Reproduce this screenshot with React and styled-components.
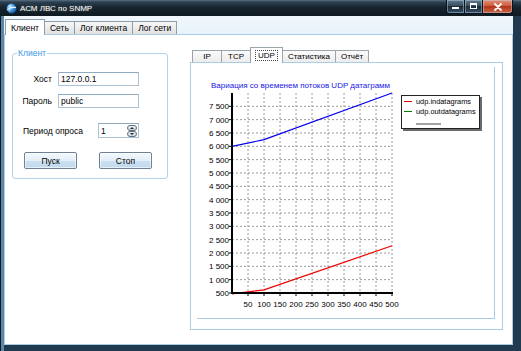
import React from 'react';
import styled, { createGlobalStyle } from 'styled-components';

const GlobalStyle = createGlobalStyle`
  html, body {
    margin: 0;
    padding: 0;
    background: #ffffff;
  }
  body {
    font-family: "Liberation Sans", Arial, sans-serif;
  }
`;

const Window = styled.div`
  width: 521px;
  height: 351px;
  display: flex;
  flex-direction: column;
  background: #1d3346;
  overflow: hidden;
  font-family: "Liberation Sans", Arial, sans-serif;
  color: #000;
`;

const TitleBar = styled.div`
  height: 16px;
  flex: none;
  display: flex;
  align-items: flex-start;
  background: linear-gradient(to bottom, #5a7082 0, #2c4253 2px, #17252f 7px, #0f1a22 100%);
`;

const TitleIcon = styled.svg`
  margin: 3px 0 0 6px;
  flex: none;
`;

const TitleText = styled.div`
  margin-left: 3px;
  line-height: 18px;
  font-size: 8px;
  color: #ffffff;
  text-shadow: 0 0 3px rgba(255, 255, 255, 0.35);
`;

const WindowButtons = styled.div`
  margin-left: auto;
  margin-right: 8px;
  display: flex;
`;

const WinButton = styled.div`
  width: ${p => p.$w}px;
  height: 14px;
  box-sizing: border-box;
  display: flex;
  align-items: center;
  justify-content: center;
  border: 1px solid #0a1319;
  border-top: none;
  box-shadow: inset 0 0 0 1px rgba(190, 215, 235, 0.45);
  background: ${p => p.$close
    ? 'linear-gradient(to bottom, #e28e76 0, #cc5637 50%, #b0361a 50%, #cf6444 100%)'
    : 'linear-gradient(to bottom, #627b8e 0, #324859 50%, #1d2d3a 50%, #34506a 100%)'};
  border-radius: ${p => p.$close ? '0 0 3px 0' : p.$first ? '0 0 0 3px' : '0'};
  margin-left: -1px;
`;

const Frame = styled.div`
  flex: 1;
  display: flex;
  padding: 0 8px 6px 4px;
  background: linear-gradient(to right, #0e1820 0, #0e1820 1px, #5d87a5 1px, #5d87a5 4px, #213a4f 4px);
`;

const Client = styled.div`
  flex: 1;
  display: flex;
  flex-direction: column;
  background: #ffffff;
`;

const TabStrip = styled.div`
  height: 18px;
  flex: none;
  display: flex;
  align-items: flex-end;
  padding-left: 1px;
  background: linear-gradient(to bottom, #f1f8fd, #e7f2fa);
  position: relative;
  z-index: 1;
`;

const MainTab = styled.div`
  height: ${p => p.$active ? 16 : 13}px;
  box-sizing: border-box;
  padding: 0 5px;
  margin-left: ${p => p.$first ? 0 : -1}px;
  margin-bottom: ${p => p.$active ? -1 : 0}px;
  display: flex;
  align-items: center;
  font-size: 8.5px;
  border: 1px solid #8c9dab;
  border-bottom: none;
  background: ${p => p.$active ? '#ffffff' : 'linear-gradient(to bottom, #f7f7f7, #e1e1e1)'};
  position: relative;
  z-index: ${p => p.$active ? 2 : 1};
`;

const TabPage = styled.div`
  flex: 1;
  display: flex;
  align-items: flex-start;
  border: 1px solid #a9cbe3;
`;

const GroupBox = styled.fieldset`
  margin: 13px 0 0 7px;
  width: 156px;
  box-sizing: border-box;
  min-inline-size: 0;
  padding: 14px 0 9px 0;
  border: 1px solid #b3d3ea;
  border-radius: 3px;
`;

const GroupLegend = styled.legend`
  margin-left: 4px;
  padding: 0 1px;
  font-size: 8.5px;
  line-height: 10px;
  color: #3a9ae6;
`;

const Row = styled.div`
  display: flex;
  align-items: center;
  margin-top: ${p => p.$top || 0}px;
  padding-left: ${p => p.$indent || 0}px;
  gap: ${p => p.$gap || 0}px;
`;

const Label = styled.span`
  width: ${p => p.$w}px;
  text-align: ${p => p.$align || 'left'};
  font-size: 8.5px;
  white-space: nowrap;
`;

const TextBox = styled.input`
  width: 81px;
  height: 14px;
  box-sizing: border-box;
  margin: 0 0 0 6px;
  padding: 0 2px;
  border: 1px solid #a9c2d6;
  border-top-color: #8fa9be;
  font-family: "Liberation Sans", Arial, sans-serif;
  font-size: 8.5px;
  color: #000;
  background: #fff;
  outline: none;
`;

const Spinner = styled.div`
  width: 41px;
  height: 15px;
  box-sizing: border-box;
  display: flex;
  align-items: center;
  border: 1px solid #a9c2d6;
  border-top-color: #8fa9be;
  padding-left: 2px;
  font-size: 8.5px;
`;

const SpinValue = styled.span`
  flex: 1;
`;

const SpinButtons = styled.div`
  display: flex;
  flex-direction: column;
  margin-right: 1px;
`;

const SpinButton = styled.div`
  width: 10px;
  height: 6px;
  box-sizing: border-box;
  border: 1px solid #5f6d78;
  border-radius: 3px;
  background: linear-gradient(to bottom, #f4f6f8, #c9d2da);
  display: flex;
  align-items: center;
  justify-content: center;
`;

const Arrow = styled.div`
  width: 0;
  height: 0;
  border-left: 2px solid transparent;
  border-right: 2px solid transparent;
  ${p => p.$down ? 'border-top: 2px solid #1d2a35;' : 'border-bottom: 2px solid #1d2a35;'}
`;

const PushButton = styled.button`
  width: 53px;
  height: 17px;
  box-sizing: border-box;
  padding: 0;
  border: 1px solid #6e8192;
  border-radius: 2px;
  font-family: "Liberation Sans", Arial, sans-serif;
  font-size: 8.5px;
  color: #000;
  background: linear-gradient(to bottom, #f3f8fc 0, #e3eef8 50%, #cde0f1 50%, #c0d9ee 100%);
  box-shadow: inset 0 0 0 1px rgba(255, 255, 255, 0.6);
`;

const RightPane = styled.div`
  margin: 12px 0 0 22px;
  width: 313px;
  height: 283px;
  display: flex;
  flex-direction: column;
`;

const InnerTabStrip = styled.div`
  height: 15px;
  flex: none;
  display: flex;
  align-items: flex-end;
  padding-left: 2px;
  position: relative;
  z-index: 1;
`;

const InnerTab = styled.div`
  min-width: 30px;
  height: ${p => p.$active ? 16 : 12}px;
  box-sizing: border-box;
  padding: 0 5px;
  margin-left: ${p => p.$first ? 0 : -1}px;
  margin-bottom: ${p => p.$active ? -1 : 0}px;
  display: flex;
  align-items: center;
  justify-content: center;
  font-size: 8px;
  border: 1px solid #9aa4ab;
  border-bottom: none;
  background: ${p => p.$active ? '#ffffff' : 'linear-gradient(to bottom, #fbfbfb, #ececec)'};
  position: relative;
  z-index: ${p => p.$active ? 2 : 1};
`;

const FocusText = styled.span`
  padding: 0 2px;
  outline: 1px dotted #444;
`;

const Panel = styled.div`
  flex: 1;
  display: flex;
  padding: 4px 7px 10px 6px;
  border: 1px solid #a9cde6;
  background: #ffffff;
`;

const ChartBox = styled.div`
  flex: 1;
  display: flex;
  flex-direction: column;
  padding-top: 14px;
  border-right: 1px solid #a9cde6;
  border-bottom: 1px solid #a9cde6;
`;

const ChartTitle = styled.div`
  padding-left: 14px;
  font-size: 8px;
  line-height: 9px;
  color: #1818e8;
  white-space: nowrap;
`;

const ChartRow = styled.div`
  display: flex;
  align-items: flex-start;
`;

const Plot = styled.svg`
  margin-left: 2px;
  flex: none;
  font-family: "Liberation Sans", Arial, sans-serif;
`;

const Legend = styled.div`
  margin: 5px 0 0 2px;
  width: 79px;
  box-sizing: border-box;
  padding: 0 0 3px 2px;
  border: 1px solid #222;
  box-shadow: 2px 2px 0 #6a6a6a;
  background: #fff;
`;

const LegendItem = styled.div`
  height: 10px;
  display: flex;
  align-items: center;
  gap: 4px;
  font-size: 7.4px;
  white-space: nowrap;
`;

const Swatch = styled.span`
  width: 8px;
  height: 1px;
  background: ${p => p.$color};
`;

const EmptyEntry = styled.div`
  width: 25px;
  height: 2px;
  margin: 7px 0 0 12px;
  background: #a4a4a4;
`;

const X0 = 33;
const YB = 203;
const xs = v => X0 + v * 0.32;
const ys = v => YB - (v - 500) * (200 / 7500);

const fmt = v => v >= 1000 ? `${Math.floor(v / 1000)} ${String(v % 1000).padStart(3, '0')}` : String(v);

const inSeries = [[0, 6000], [100, 6250], [500, 8000]];
const outSeries = [[0, 470], [100, 620], [500, 2270]];
const toPoints = s => s.map(([x, v]) => `${xs(x)},${ys(v)}`).join(' ');

const yValues = Array.from({ length: 15 }, (_, i) => 500 + i * 500);
const xValues = Array.from({ length: 10 }, (_, i) => 50 + i * 50);

function UdpChart() {
  return (
    <Plot width="200" height="222" viewBox="0 0 200 222">
      {xValues.map(v => (
        <line key={'gx' + v} x1={xs(v)} y1={ys(8000)} x2={xs(v)} y2={YB} stroke="#9a9a9a" strokeWidth="1" strokeDasharray="2 2" />
      ))}
      {yValues.slice(1).map(v => (
        <line key={'gy' + v} x1={X0} y1={ys(v)} x2={xs(500)} y2={ys(v)} stroke="#9a9a9a" strokeWidth="1" strokeDasharray="2 2" />
      ))}
      <polyline points={toPoints(inSeries)} fill="none" stroke="#0000f0" strokeWidth="1.2" />
      <polyline points={toPoints(outSeries)} fill="none" stroke="#f00000" strokeWidth="1.2" />
      <line x1={X0} y1={ys(8000)} x2={X0} y2={YB + 1} stroke="#000" strokeWidth="2" />
      <line x1={X0 - 1} y1={YB} x2={xs(500) + 1} y2={YB} stroke="#000" strokeWidth="2" />
      {yValues.map(v => (
        <g key={'ty' + v}>
          <line x1={X0 - 3} y1={ys(v)} x2={X0} y2={ys(v)} stroke="#000" strokeWidth="1" />
          <text x={X0 - 3} y={ys(v) + 3} fontSize="8" textAnchor="end">{fmt(v)}</text>
        </g>
      ))}
      {xValues.map(v => (
        <g key={'tx' + v}>
          <line x1={xs(v)} y1={YB} x2={xs(v)} y2={YB + 3} stroke="#000" strokeWidth="1" />
          <text x={xs(v)} y={YB + 14} fontSize="8" textAnchor="middle">{v}</text>
        </g>
      ))}
    </Plot>
  );
}

function AppIcon() {
  return (
    <TitleIcon width="11" height="11" viewBox="0 0 12 12">
      <defs>
        <radialGradient id="globe" cx="0.35" cy="0.3" r="0.8">
          <stop offset="0" stopColor="#d9f0ff" />
          <stop offset="0.45" stopColor="#4aa3e6" />
          <stop offset="1" stopColor="#124f8c" />
        </radialGradient>
      </defs>
      <circle cx="6" cy="6" r="5.4" fill="url(#globe)" stroke="#0d3a66" strokeWidth="0.6" />
      <path d="M1.5 7.5 Q6 3.5 10.8 5" fill="none" stroke="#ffffff" strokeWidth="1.1" />
      <path d="M4 2 Q5 6 3.5 10" fill="none" stroke="#bfe3ff" strokeWidth="0.6" />
    </TitleIcon>
  );
}

export default function App() {
  return (
    <>
      <GlobalStyle />
      <Window>
        <TitleBar>
          <AppIcon />
          <TitleText>АСМ ЛВС по SNMP</TitleText>
          <WindowButtons>
            <WinButton $w={19} $first>
              <svg width="9" height="7" viewBox="0 0 9 7">
                <rect x="1" y="4" width="7" height="2" fill="#fff" />
              </svg>
            </WinButton>
            <WinButton $w={19}>
              <svg width="9" height="7" viewBox="0 0 9 7">
                <rect x="1.5" y="0.5" width="6" height="5" fill="none" stroke="#fff" strokeWidth="1" />
                <rect x="1.5" y="0.5" width="6" height="1.5" fill="#fff" />
              </svg>
            </WinButton>
            <WinButton $w={31} $close>
              <svg width="10" height="8" viewBox="0 0 10 8">
                <path d="M2 1 L8 7 M8 1 L2 7" stroke="#ffffff" strokeWidth="1.8" strokeLinecap="round" />
              </svg>
            </WinButton>
          </WindowButtons>
        </TitleBar>
        <Frame>
          <Client>
            <TabStrip>
              <MainTab $active $first>Клиент</MainTab>
              <MainTab>Сеть</MainTab>
              <MainTab>Лог клиента</MainTab>
              <MainTab>Лог сети</MainTab>
            </TabStrip>
            <TabPage>
              <GroupBox>
                <GroupLegend>Клиент</GroupLegend>
                <Row>
                  <Label $w={39} $align="right">Хост</Label>
                  <TextBox defaultValue="127.0.0.1" readOnly />
                </Row>
                <Row $top={8}>
                  <Label $w={39} $align="right">Пароль</Label>
                  <TextBox defaultValue="public" readOnly />
                </Row>
                <Row $top={15} $indent={10}>
                  <Label $w={75}>Период опроса</Label>
                  <Spinner>
                    <SpinValue>1</SpinValue>
                    <SpinButtons>
                      <SpinButton><Arrow /></SpinButton>
                      <SpinButton><Arrow $down /></SpinButton>
                    </SpinButtons>
                  </Spinner>
                </Row>
                <Row $top={14} $indent={11} $gap={22}>
                  <PushButton>Пуск</PushButton>
                  <PushButton>Стоп</PushButton>
                </Row>
              </GroupBox>
              <RightPane>
                <InnerTabStrip>
                  <InnerTab $first>IP</InnerTab>
                  <InnerTab>TCP</InnerTab>
                  <InnerTab $active><FocusText>UDP</FocusText></InnerTab>
                  <InnerTab>Статистика</InnerTab>
                  <InnerTab>Отчёт</InnerTab>
                </InnerTabStrip>
                <Panel>
                  <ChartBox>
                    <ChartTitle>Вариация со временем потоков UDP датаграмм</ChartTitle>
                    <ChartRow>
                      <UdpChart />
                      <Legend>
                        <LegendItem><Swatch $color="#e00000" />udp.indatagrams</LegendItem>
                        <LegendItem><Swatch $color="#008000" />udp.outdatagrams</LegendItem>
                        <EmptyEntry />
                      </Legend>
                    </ChartRow>
                  </ChartBox>
                </Panel>
              </RightPane>
            </TabPage>
          </Client>
        </Frame>
      </Window>
    </>
  );
}
